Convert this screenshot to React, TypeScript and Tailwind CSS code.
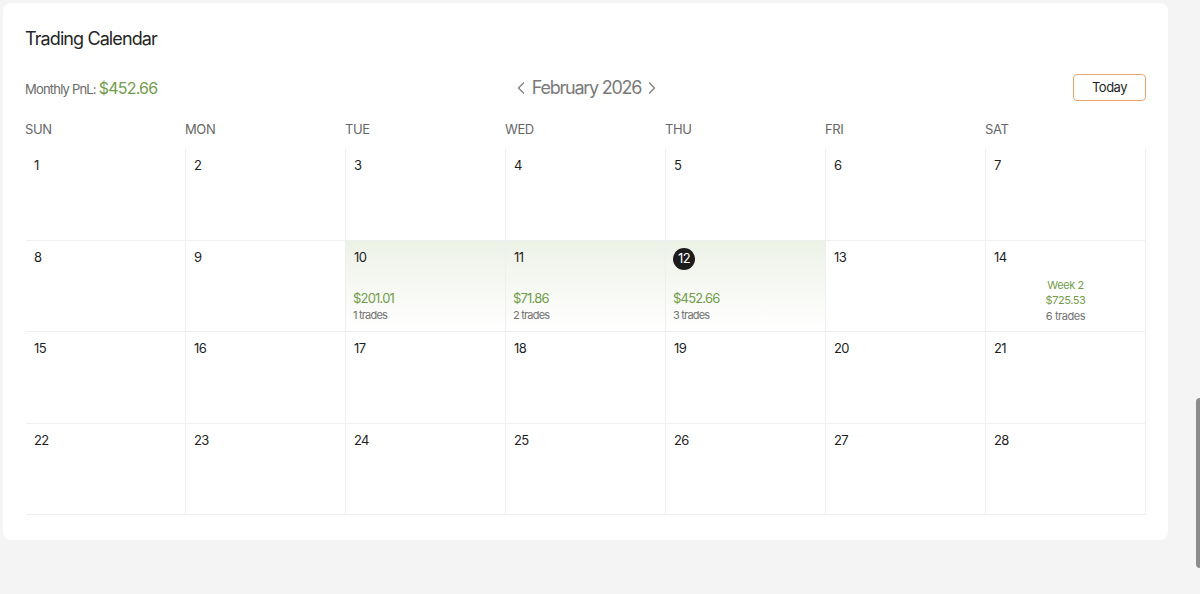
import React from "react";

const font = { fontFamily: "Inter, 'Noto Sans', sans-serif" };

type DayData = { pnl: string; trades: number };

const dayData: Record<number, DayData> = {
  10: { pnl: "$201.01", trades: 1 },
  11: { pnl: "$71.86", trades: 2 },
  12: { pnl: "$452.66", trades: 3 },
};

const weekData: Record<number, { label: string; pnl: string; trades: number }> = {
  14: { label: "Week 2", pnl: "$725.53", trades: 6 },
};

const weekdays = ["SUN", "MON", "TUE", "WED", "THU", "FRI", "SAT"];

function Chevron({ dir }: { dir: "left" | "right" }) {
  return (
    <svg width="8" height="12" viewBox="0 0 8 12" fill="none">
      <polyline
        points={dir === "left" ? "6.5,1 1.5,6 6.5,11" : "1.5,1 6.5,6 1.5,11"}
        stroke="#7a7a7a"
        strokeWidth="1.2"
        strokeLinecap="round"
        strokeLinejoin="round"
      />
    </svg>
  );
}

function DayCell({ day }: { day: number }) {
  const data = dayData[day];
  const week = weekData[day];
  const isToday = day === 12;
  return (
    <div
      className={
        "relative h-[91.5px] border-r border-b border-[#efefef] " +
        (data ? "bg-gradient-to-b from-[#edf2e7] to-white" : "bg-white")
      }
    >
      {isToday ? (
        <div className="ml-[7px] mt-[7px] flex h-[22px] w-[22px] items-center justify-center rounded-full bg-[#1c1c1c] text-[13px] text-white tracking-[-0.05em]">
          {day}
        </div>
      ) : (
        <div className="pl-[8px] pt-[8px] text-[13px] leading-[16px] text-[#1e1e1e] tracking-[-0.05em]">
          {day}
        </div>
      )}
      {data && (
        <div className="absolute left-[7px] top-[49px] tracking-[-0.05em]">
          <div className="text-[13px] leading-[16px] text-[#719c4b]">{data.pnl}</div>
          <div className="mt-[2px] text-[11px] leading-[14px] text-[#727272]">
            {data.trades} trades
          </div>
        </div>
      )}
      {week && (
        <div className="absolute left-0 right-0 top-[37px] flex flex-col items-center text-[11px] leading-[15.5px] tracking-[-0.04em]">
          <div className="text-[#719c4b]">{week.label}</div>
          <div className="text-[#719c4b]">{week.pnl}</div>
          <div className="text-[#727272]">{week.trades} trades</div>
        </div>
      )}
    </div>
  );
}

export default function App() {
  const days = Array.from({ length: 28 }, (_, i) => i + 1);

  return (
    <div className="relative h-[594px] w-full overflow-hidden bg-[#f4f4f4] pl-[3px] pt-[3px]" style={font}>
      <div className="w-[1165px] rounded-lg bg-white pl-[22px] pr-[23px] pt-[24px] pb-[25px]">
        <h1 className="text-[18px] leading-[24px] text-[#262626] tracking-[-0.05em]">
          Trading Calendar
        </h1>

        <div className="mt-[23px] flex h-[27px] items-center justify-between">
          <div className="flex w-[300px] items-baseline gap-[3px] tracking-[-0.05em]">
            <span className="text-[13px] text-[#6a6a6a]">Monthly PnL:</span>
            <span className="text-[16px] text-[#719c4b]">$452.66</span>
          </div>
          <div className="flex items-center gap-[7px] pl-[3px]">
            <Chevron dir="left" />
            <span className="text-[18px] leading-[24px] text-[#7a7a7a] tracking-[-0.07em]">
              February 2026
            </span>
            <Chevron dir="right" />
          </div>
          <div className="flex w-[300px] justify-end">
            <button className="h-[27px] w-[73px] translate-x-[1px] rounded-[4px] border border-[#e9a46c] bg-white text-[13px] text-[#1e1e1e] tracking-[-0.04em]">
              Today
            </button>
          </div>
        </div>

        <div className="mt-[18px] mb-[10px] grid grid-cols-7">
          {weekdays.map((d) => (
            <div key={d} className="text-[13px] leading-[20px] text-[#666666] tracking-[-0.03em]">
              {d}
            </div>
          ))}
        </div>

        <div className="ml-[1px] grid w-[1120px] grid-cols-7">
          {days.map((d) => (
            <DayCell key={d} day={d} />
          ))}
        </div>
      </div>

      <div className="absolute right-0 top-[398px] h-[170px] w-[4px] rounded-l-sm bg-[#8c8c8c]" />
    </div>
  );
}
